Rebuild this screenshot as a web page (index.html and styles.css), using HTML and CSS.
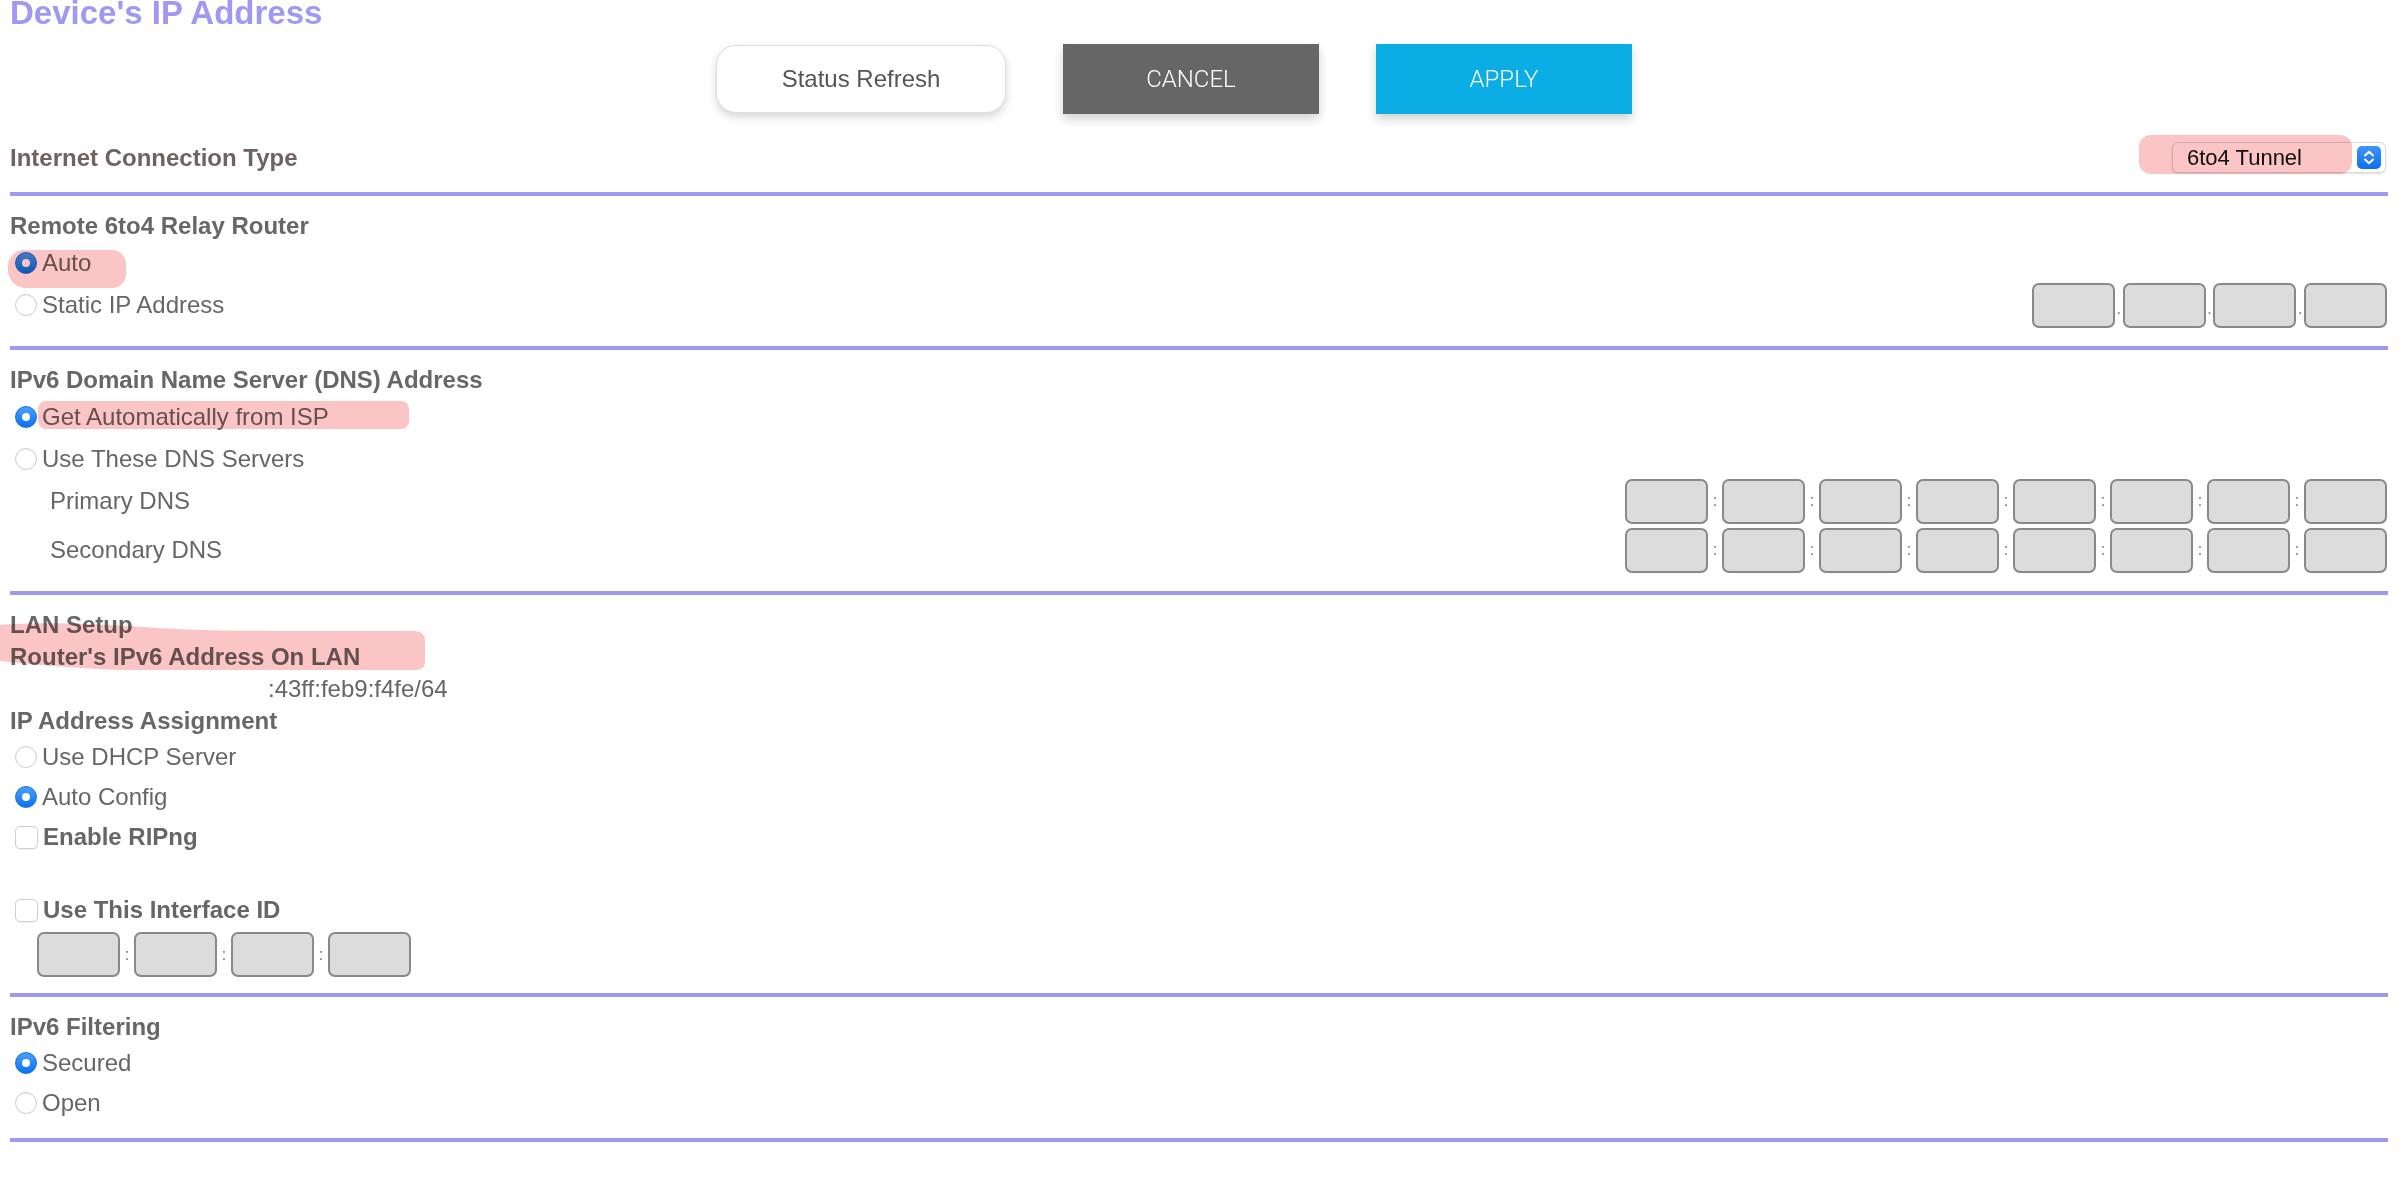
FILE: index.html
```html
<!DOCTYPE html>
<html lang="en">
<head>
<meta charset="utf-8">
<title>Device's IP Address</title>
<link rel="stylesheet" href="styles.css">
</head>
<body>
<div class="page">
  <h1 class="title">Device's IP Address</h1>

  <div class="actions">
    <button class="btn btn-refresh">Status Refresh</button>
    <button class="btn btn-cancel">CANCEL</button>
    <button class="btn btn-apply">APPLY</button>
  </div>

  <div class="conn-row">
    <span class="heading heading-brown">Internet Connection Type</span>
    <div class="select">
      <span class="select-text">6to4 Tunnel</span>
      <span class="stepper">
        <svg width="24" height="23" viewBox="0 0 24 23"><path d="M8 9.5 L12 5.8 L16 9.5" fill="none" stroke="#fff" stroke-width="2" stroke-linecap="round" stroke-linejoin="round"/><path d="M8 13.5 L12 17.2 L16 13.5" fill="none" stroke="#fff" stroke-width="2" stroke-linecap="round" stroke-linejoin="round"/></svg>
      </span>
    </div>
  </div>
  <div class="rule"></div>

  <section class="sec">
    <div class="heading hrow">Remote 6to4 Relay Router</div>
    <div class="opt"><span class="radio on"></span><span class="lbl">Auto</span></div>
    <div class="opt spread">
      <span class="left"><span class="radio"></span><span class="lbl">Static IP Address</span></span>
      <span class="fields">
        <input class="box" type="text"><span class="sep dot">.</span><input class="box" type="text"><span class="sep dot">.</span><input class="box" type="text"><span class="sep dot">.</span><input class="box" type="text">
      </span>
    </div>
  </section>
  <div class="rule"></div>

  <section class="sec">
    <div class="heading hrow">IPv6 Domain Name Server (DNS) Address</div>
    <div class="opt"><span class="radio on"></span><span class="lbl">Get Automatically from ISP</span></div>
    <div class="opt"><span class="radio"></span><span class="lbl">Use These DNS Servers</span></div>
    <div class="opt spread">
      <span class="lbl indent">Primary DNS</span>
      <span class="fields">
        <input class="box" type="text"><span class="sep col">:</span><input class="box" type="text"><span class="sep col">:</span><input class="box" type="text"><span class="sep col">:</span><input class="box" type="text"><span class="sep col">:</span><input class="box" type="text"><span class="sep col">:</span><input class="box" type="text"><span class="sep col">:</span><input class="box" type="text"><span class="sep col">:</span><input class="box" type="text">
      </span>
    </div>
    <div class="opt spread second">
      <span class="lbl indent">Secondary DNS</span>
      <span class="fields">
        <input class="box" type="text"><span class="sep col">:</span><input class="box" type="text"><span class="sep col">:</span><input class="box" type="text"><span class="sep col">:</span><input class="box" type="text"><span class="sep col">:</span><input class="box" type="text"><span class="sep col">:</span><input class="box" type="text"><span class="sep col">:</span><input class="box" type="text"><span class="sep col">:</span><input class="box" type="text">
      </span>
    </div>
  </section>
  <div class="rule"></div>

  <section class="sec sec-lan">
    <div class="heading hrow">LAN Setup</div>
    <div class="heading hrow">Router's IPv6 Address On LAN</div>
    <div class="addr">:43ff:feb9:f4fe/64</div>
    <div class="heading hrow">IP Address Assignment</div>
    <div class="opt short"><span class="radio"></span><span class="lbl">Use DHCP Server</span></div>
    <div class="opt short"><span class="radio on"></span><span class="lbl">Auto Config</span></div>
    <div class="opt short"><span class="check"></span><span class="lbl strong">Enable RIPng</span></div>
    <div class="opt short gap-top"><span class="check"></span><span class="lbl strong">Use This Interface ID</span></div>
    <div class="iface">
      <input class="box" type="text"><span class="sep col">:</span><input class="box" type="text"><span class="sep col">:</span><input class="box" type="text"><span class="sep col">:</span><input class="box" type="text">
    </div>
  </section>
  <div class="rule"></div>

  <section class="sec sec-filter">
    <div class="heading hrow">IPv6 Filtering</div>
    <div class="opt short"><span class="radio on"></span><span class="lbl">Secured</span></div>
    <div class="opt short"><span class="radio"></span><span class="lbl">Open</span></div>
  </section>
  <div class="rule"></div>

  <!-- pink highlighter annotations drawn over the page -->
  <div class="mark mark-select"></div>
  <div class="mark mark-auto"></div>
  <div class="mark mark-isp"></div>
  <svg class="mark-svg mark-lan" width="430" height="52" viewBox="0 0 430 52">
    <path d="M0 3 C30 0 80 1 130 4 C170 7 200 9 300 9 L415 9 Q425 9 425 19 L425 40 Q425 48 415 48 L120 48 C70 46 30 42 0 39 Z" fill="#fbc5c5"/>
  </svg>
</div>
</body>
</html>
```

FILE: styles.css
```css
html, body {
  margin: 0;
  padding: 0;
  background: #ffffff;
}

body {
  font-family: "Liberation Sans", Arial, Helvetica, sans-serif;
  color: #666666;
}

.page {
  position: relative;
  width: 2378px;
  padding: 0 20px 0 10px;
  overflow: hidden;
}

.title {
  margin: -4px 0 0 0;
  font-size: 33px;
  line-height: 33px;
  font-weight: bold;
  color: #a198f5;
}

.actions {
  display: flex;
  align-items: center;
  gap: 57px;
  height: 70px;
  margin-top: 15px;
  padding-left: 706px;
}

.btn {
  font-family: "Liberation Sans", Arial, sans-serif;
  font-size: 24px;
  border: none;
  padding: 0;
  cursor: pointer;
}

.btn-refresh {
  width: 290px;
  height: 68px;
  background: #ffffff;
  color: #555555;
  border: 1px solid #dedede;
  border-radius: 20px;
  box-shadow: 0 4px 9px rgba(0, 0, 0, 0.16);
}

.btn-cancel,
.btn-apply {
  width: 256px;
  height: 70px;
  color: #ffffff;
  font-family: "Roboto", "Liberation Sans", sans-serif;
  font-weight: 300;
  box-shadow: 0 5px 10px rgba(0, 0, 0, 0.18);
}

.btn-cancel { background: #666666; }
.btn-apply { background: #0aaee4; }

.conn-row {
  display: flex;
  align-items: center;
  justify-content: space-between;
  height: 31px;
  margin-top: 28px;
  margin-bottom: 19px;
  padding-right: 2px;
}

.heading {
  font-size: 24px;
  font-weight: bold;
  color: #676767;
}

.heading-brown {
  color: #6e6262;
}

.hrow {
  height: 32px;
  line-height: 32px;
  white-space: nowrap;
}

.select {
  display: flex;
  align-items: center;
  justify-content: space-between;
  box-sizing: border-box;
  width: 214px;
  height: 31px;
  padding: 0 4px 0 14px;
  background: #ffffff;
  border: 1px solid #dadada;
  border-radius: 6px;
  box-shadow: 0 1px 2px rgba(0, 0, 0, 0.12);
}

.select-text {
  font-family: "Liberation Sans", Arial, sans-serif;
  font-size: 22px;
  color: #111111;
}

.stepper {
  display: flex;
  width: 24px;
  height: 23px;
  border-radius: 5px;
  background: linear-gradient(#3f95fb, #0b6fef);
}

.rule {
  height: 4px;
  background: #9d98f0;
}

.sec {
  padding-top: 14px;
  padding-bottom: 20px;
}

.opt {
  display: flex;
  align-items: center;
  height: 42px;
  font-size: 24px;
}

.opt.short {
  height: 40px;
}

.opt.second {
  margin-top: 7px;
}

.opt.gap-top {
  margin-top: 33px;
}

.spread {
  justify-content: space-between;
  padding-right: 1px;
}

.left {
  display: flex;
  align-items: center;
}

.lbl {
  color: #666666;
  white-space: nowrap;
}

.lbl.strong {
  font-weight: bold;
}

.lbl.indent {
  padding-left: 40px;
}

.radio {
  flex: none;
  position: relative;
  box-sizing: border-box;
  width: 22px;
  height: 22px;
  margin: 0 5px 0 5px;
  border-radius: 50%;
  background: #ffffff;
  border: 1px solid #cdcdcd;
  box-shadow: inset 0 1px 1px rgba(0, 0, 0, 0.05);
}

.radio.on {
  background: linear-gradient(#4aa1fc, #0a71f0);
  border-color: #1a74e8;
}

.radio.on::after {
  content: "";
  position: absolute;
  left: 50%;
  top: 50%;
  width: 8px;
  height: 8px;
  margin: -4px 0 0 -4px;
  border-radius: 50%;
  background: #ffffff;
}

.check {
  flex: none;
  box-sizing: border-box;
  width: 23px;
  height: 23px;
  margin: 0 5px 0 5px;
  border-radius: 5px;
  background: #ffffff;
  border: 1px solid #cfcfcf;
  box-shadow: 0 1px 1px rgba(0, 0, 0, 0.06);
}

.fields {
  display: flex;
  align-items: center;
}

.box {
  flex: none;
  box-sizing: border-box;
  width: 83px;
  height: 45px;
  margin: 0;
  padding: 0;
  background: #dcdcdc;
  border: 2px solid #898989;
  border-radius: 7px;
}

.sep {
  display: flex;
  justify-content: center;
  color: #777777;
  font-size: 16px;
  line-height: 16px;
}

.sep.dot {
  width: 7.7px;
  padding-top: 8px;
}

.sep.col {
  width: 14px;
}

.addr {
  height: 32px;
  line-height: 32px;
  padding-left: 258px;
  font-size: 24px;
  color: #666666;
}

.iface {
  display: flex;
  align-items: center;
  margin-top: 2px;
  padding-left: 27px;
}

.sec-lan {
  padding-bottom: 16px;
}

.sec-filter {
  padding-bottom: 15px;
}

/* highlighter annotations */
.mark {
  position: absolute;
  background: #fbc5c5;
  mix-blend-mode: multiply;
}

.mark-select {
  left: 2139px;
  top: 135px;
  width: 213px;
  height: 39px;
  border-radius: 12px;
}

.mark-auto {
  left: 8px;
  top: 250px;
  width: 118px;
  height: 38px;
  border-radius: 16px 14px 14px 18px;
}

.mark-isp {
  left: 38px;
  top: 401px;
  width: 371px;
  height: 28px;
  border-radius: 8px;
}

.mark-svg {
  position: absolute;
  mix-blend-mode: multiply;
}

.mark-lan {
  left: 0;
  top: 622px;
}
```
